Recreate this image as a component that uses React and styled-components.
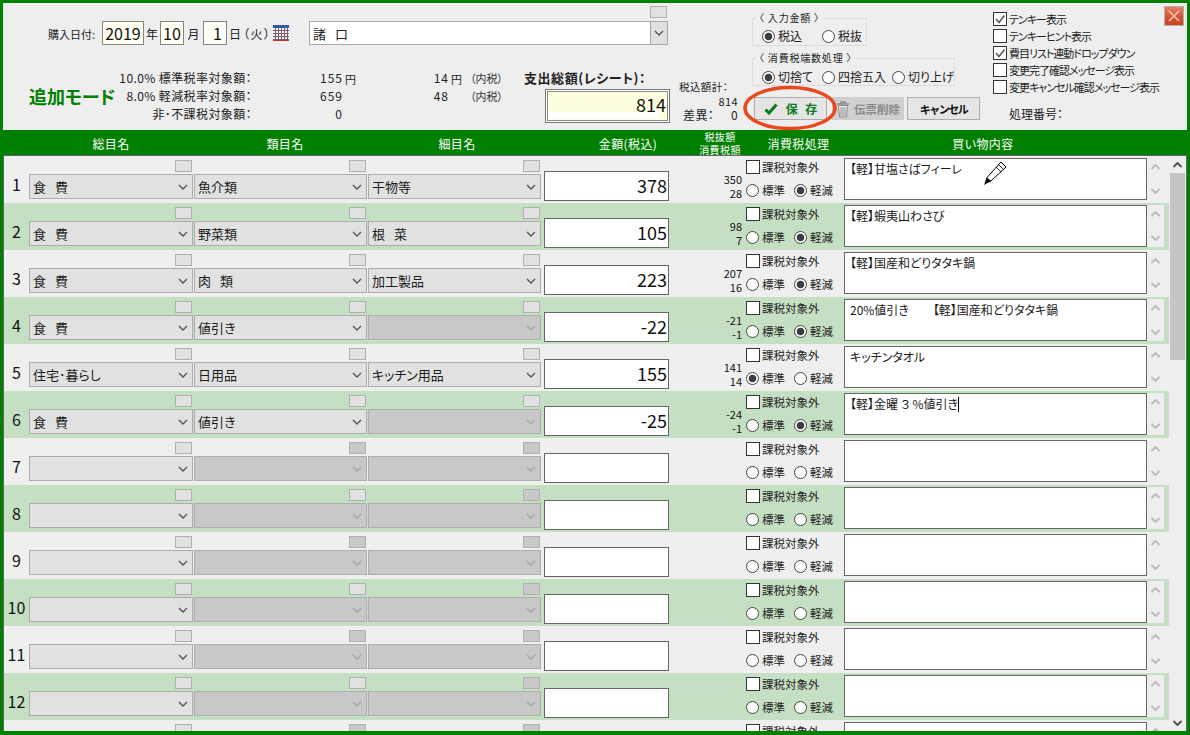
import React from "react";
import styled, { createGlobalStyle } from "styled-components";

const dither = (a, b) => `repeating-conic-gradient(${a} 0 25%, ${b} 0 50%) 0 0 / 2px 2px`;

const Global = createGlobalStyle`
  html, body { margin: 0; padding: 0; background: #eeeeee; }
  body { font-family: "Noto Sans CJK JP", "Noto Sans", sans-serif; color: #222; font-feature-settings: "palt"; }
  * { box-sizing: border-box; }
`;

const Frame = styled.div`
  position: relative; width: 1190px; height: 735px; overflow: hidden;
  display: flex; flex-direction: column;
  border: 3px solid #008000; border-bottom-width: 4px; background: #eeeeee;
`;

const TopPanel = styled.header`
  flex: none; height: 127px; display: flex; align-items: flex-start; background: #eeeeee;
`;
const LeftBlock = styled.div`
  flex: none; width: 749px; display: flex; flex-direction: column;
`;
const DateRow = styled.div`
  height: 39px; margin-top: 3px; padding-left: 45px; display: flex; align-items: flex-end;
`;
const DateCaption = styled.span`
  font-size: 11px; height: 24px; line-height: 26px; width: 54px;
`;
const DateInput = styled.input`
  width: ${p => p.$w}px; height: 24px; padding: 0 ${p => (p.$right ? 4 : 0)}px 0 0; margin: 0;
  border: 1px solid #858585; background: ${p => (p.$right ? dither("#fbfbec", "#ffffff") : "#fffff2")};
  font: 16px/22px "Noto Sans CJK JP", sans-serif; color: #111;
  text-align: ${p => (p.$right ? "right" : "center")}; outline: none;
`;
const DateUnit = styled.span`
  font-size: 12px; height: 24px; line-height: 26px; width: ${p => p.$w}px; text-align: ${p => p.$align || "center"};
  letter-spacing: ${p => p.$track || 0}px; white-space: nowrap;
`;
const CalendarSlot = styled.span`
  display: flex; width: 36px; height: 20px; align-items: flex-start;
`;
const StoreColumn = styled.div`
  width: 359px; display: flex; flex-direction: column; align-items: flex-end; gap: 3px;
`;
const StoreSelect = styled.div`
  width: 100%; height: 24px; display: flex; align-items: center; justify-content: space-between;
  background: #fff; border: 1px solid #a8a8a8; font-size: 13px; padding-left: 3px; word-spacing: 6px;
`;
const StoreArrow = styled.span`
  width: 18px; height: 24px; margin-right: -1px; display: flex; align-items: center; justify-content: center;
  background: ${dither("#e4e4e4", "#dcdcdc")}; border: 1px solid #a8a8a8;
`;
const SummaryRow = styled.div`
  display: flex; align-items: flex-start; margin-top: 24px;
`;
const ModeTitle = styled.div`
  width: 115px; padding: 16px 0 0 26px; color: #008000; font-size: 18px; font-weight: 700; line-height: 22px; white-space: nowrap;
`;
const SummaryGrid = styled.div`
  display: grid; grid-template-columns: 134px 91px 90px 16px 21px 33px; grid-auto-rows: 18px;
  font-size: 12px; line-height: 18px; white-space: nowrap;
`;
const SumLabel = styled.span`
  text-align: right; font-size: 12px; letter-spacing: .4px;
`;
const SumValue = styled.span`
  text-align: right; letter-spacing: 1px;
`;
const Yen = styled.span`
  padding-left: 2px; font-size: 11px; line-height: 21px;
`;
const Note = styled.span`
  font-size: 11px; color: #333;
`;
const TotalBlock = styled.div`
  margin-left: 21px; display: flex; flex-direction: column; align-items: flex-end; width: 146px;
`;
const TotalLabel = styled.div`
  width: 100%; font-size: 13px; font-weight: 700; line-height: 16px; margin-top: 1px; letter-spacing: .55px; white-space: nowrap;
`;
const TotalInput = styled.input`
  width: 125px; height: 34px; margin: 3px 0 0; padding: 0 3px 4px 0; border: 1px solid #777;
  box-shadow: inset 0 0 0 1px #fff, inset 0 0 0 2px #888;
  background: linear-gradient(#fff, #fff) no-repeat left 2px bottom 3px / 110px 7px, #fffde0;
  font: 18px/24px "Noto Sans CJK JP", sans-serif; text-align: right; color: #111; outline: none;
`;
const CheckSum = styled.div`
  margin: 11px 0 0 9px; width: 59px; display: grid; grid-auto-rows: 14px; line-height: 14px; white-space: nowrap;
`;
const CheckSumLine = styled.div`
  display: flex; justify-content: ${p => p.$between ? "space-between" : "flex-end"};
  font-size: ${p => p.$size || 10}px; padding-left: ${p => p.$inset || 0}px; letter-spacing: .4px;
`;
const CheckSumTitle = styled.span`
  margin-right: auto;
`;
const TaxBlock = styled.div`
  flex: none; width: 241px; display: flex; flex-direction: column; align-items: flex-start;
`;
const Group = styled.fieldset`
  width: ${p => p.$w}px; height: ${p => p.$h}px; margin: ${p => p.$top}px 0 0; padding: ${p => p.$pad}px 0 0 9px;
  border: 1px solid #dcdcdc; display: flex; align-items: flex-start;
`;
const GroupTitle = styled.legend`
  padding: 0 3px; margin-left: -6px; font-size: 10px; line-height: 12px; letter-spacing: .8px; color: #222;
`;
const RadioItem = styled.label`
  display: flex; align-items: center; gap: 3px; font-size: ${p => p.$size || 12}px; line-height: 18px; height: 18px; white-space: nowrap; width: ${p => p.$w ? p.$w + "px" : "auto"};
`;
const RadioDot = styled.input.attrs({ type: "radio", readOnly: true })`
  appearance: none; flex: none; width: 13px; height: 13px; margin: 0; border-radius: 50%;
  border: 1px solid #444; background: #fff;
  &:checked { background: radial-gradient(circle, #3c3c44 0 3.4px, #fff 4.2px); }
`;
const ButtonRow = styled.div`
  display: flex; margin: 11px 0 0 2px;
`;
const ActionButton = styled.button`
  height: 23px; width: ${p => p.$w}px; margin: 0 ${p => p.$gap || 0}px 0 0; padding: 0;
  display: flex; align-items: center; justify-content: center; gap: ${p => p.$iconGap || 0}px;
  border: 1px solid ${p => p.$disabled ? "#cdcdcd" : "#adadad"};
  background: ${p => p.$disabled ? "#cfcfcf" : dither("#e8e8e8", "#e2e2e2")};
  color: ${p => p.$color || "#111"}; font: 700 ${p => p.$size || 12}px "Noto Sans CJK JP", sans-serif;
  letter-spacing: ${p => p.$track || 0}px; word-spacing: ${p => p.$word || 0}px; white-space: nowrap;
`;
const OptionColumn = styled.div`
  flex: none; width: 171px; padding-top: 7px; display: flex; flex-direction: column;
`;
const OptionRow = styled.div`
  display: flex; align-items: center; gap: 2px; height: 17px; font-size: 11px; letter-spacing: -1px; white-space: nowrap;
`;
const Box = styled.span`
  flex: none; width: 14px; height: 14px; background: #fff; border: 1px solid #333; display: flex; align-items: center; justify-content: center;
`;
const JobNumber = styled.div`
  margin: 11px 0 0 16px; font-size: 12px; line-height: 16px;
`;
const CloseButton = styled.button`
  margin: 3px 3px 0 auto; flex: none; width: 20px; height: 20px; padding: 0;
  border: 1px solid #b0b0b0; display: flex; align-items: center; justify-content: center;
  background: linear-gradient(#e8806a, #d9502f 55%, #c9441f);
`;

const HeadBar = styled.div`
  flex: none; height: 25px; background: #008000; color: #fff; padding-left: 26px;
  display: grid; grid-template-columns: 164px 184px 160px 161px 44px 113px 256px; align-items: center;
  font-size: 12px; letter-spacing: .4px; text-align: center;
`;
const HeadCell = styled.div`
  padding-left: ${p => p.$inset || 0}px; white-space: nowrap; font-size: ${p => p.$size || 12}px; line-height: ${p => p.$lh ? p.$lh + "px" : "inherit"};
`;

const Body = styled.div`
  flex: 1; min-height: 0; display: flex; border: 1px solid #666; border-bottom: none; overflow: hidden;
`;
const List = styled.div`
  flex: none; width: 1165px; display: flex; flex-direction: column;
`;
const Row = styled.div`
  flex: none; height: 47px; display: flex; padding-right: 5px;
  background: ${p => p.$even ? dither("#c3dfc1", "#c7e0c5") : "#efefef"};
`;
const RowNo = styled.div`
  flex: none; width: 25px; padding-top: 18px; text-align: center; font-size: 16px; line-height: 20px; color: #111;
`;
const SelectCell = styled.div`
  flex: none; width: ${p => p.$w}px; margin-right: 1px; padding-top: 4px; display: flex; flex-direction: column; align-items: flex-end; gap: 2px;
`;
const TinyBox = styled.span`
  display: block; width: 17px; height: 12px; margin-right: 1px;
  border: 1px solid #b0b0b0; background: ${p => p.$off ? dither("#cbcbcb", "#c6c6c6") : dither("#e4e4e4", "#dedede")};
`;
const Select = styled.div`
  width: 100%; height: 25px; display: flex; align-items: center; justify-content: space-between;
  padding: 0 4px 0 3px; border: 1px solid #adadad; font-size: 13px; word-spacing: 6px; white-space: nowrap; color: #1a1a1a;
  background: ${p => p.$off ? dither("#cbcbcb", "#c5c5c5") : dither("#e4e4e4", "#dedede")};
`;
const Amount = styled.input`
  flex: none; width: 125px; height: 30px; margin: 15px 0 0 2px; padding: 0 1px 2px 0; border: 1px solid #666; background: #fff;
  font: 18px/26px "Noto Sans CJK JP", sans-serif; text-align: right; color: #111; outline: none;
`;
const TaxCell = styled.div`
  flex: none; width: 75px; padding: 16px 2px 0 0; text-align: right; font-size: 11px; line-height: 14px; color: #111;
`;
const ProcessCell = styled.div`
  flex: none; width: 100px; padding: 4px 0 0 2px;
`;
const ExemptRow = styled.div`
  display: flex; align-items: center; gap: 2px; height: 14px; font-size: 11.5px; line-height: 12px; white-space: nowrap;
`;
const RateRow = styled.div`
  display: flex; align-items: center; margin-top: 9px; height: 14px;
`;
const MemoWrap = styled.div`
  flex: none; height: 42px; margin-top: 2px; display: flex;
`;
const Memo = styled.div`
  width: 303px; height: 42px; padding: 1px 5px; border: 1px solid #666; background: #fff;
  font-size: 12px; line-height: 18px; white-space: nowrap; overflow: hidden; color: #1a1a1a;
`;
const Caret = styled.span`
  display: inline-block; width: 1px; height: 15px; background: #000; vertical-align: -3px;
`;
const MiniScroll = styled.div`
  width: 17px; padding: 6px 0; display: flex; flex-direction: column; align-items: center; justify-content: space-between; background: #eeeeee;
`;
const PageScroll = styled.div`
  flex: 1; background: #eeeeee; display: flex; flex-direction: column; align-items: center;
`;
const ScrollArrow = styled.div`
  flex: none; height: 17px; width: 100%; display: flex; align-items: center; justify-content: center; margin-top: ${p => p.$end ? "auto" : 0};
`;
const ScrollThumb = styled.div`
  flex: none; width: 15px; height: 187px; margin-right: 1px; background: ${dither("#c8c8c8", "#c2c2c2")};
`;
const Ring = styled.svg`
  position: absolute; left: 740px; top: 81px; pointer-events: none;
`;
const Cursor = styled.svg`
  position: absolute; left: 979px; top: 157px; pointer-events: none;
`;

const Chevron = ({ up, color = "#555", w = 10, sw = 1.4 }) => (
  <svg width={w} height={6} viewBox="0 0 10 6" fill="none" aria-hidden="true">
    <path d={up ? "M1 5 5 1 9 5" : "M1 1 5 5 9 1"} stroke={color} strokeWidth={sw} />
  </svg>
);
const Tick = () => (
  <svg width="12" height="12" viewBox="0 0 12 12" fill="none" aria-hidden="true">
    <path d="M2 6 5 9.5 10.5 2.5" stroke="#555" strokeWidth="1.5" />
  </svg>
);
const Calendar = () => (
  <svg width="16" height="16" viewBox="0 0 16 16" aria-hidden="true">
    <rect width="16" height="16" fill="#fff" />
    <rect width="16" height="3" fill="#2a5db0" />
    <path d="M0 5.5h16M0 8.5h16M0 11.5h16M0 14.5h16M2.5 3v13M5.5 3v13M8.5 3v13M11.5 3v13M14.5 3v13" stroke="#7a5a6a" strokeWidth="1" />
    <path d="M0 15.5h16" stroke="#c03030" />
  </svg>
);
const SaveTick = () => (
  <svg width="14" height="12" viewBox="0 0 14 12" fill="none" aria-hidden="true">
    <path d="M1.5 6.5 5 10 12.5 1.5" stroke="#0a7a1a" strokeWidth="3" />
  </svg>
);
const Trash = () => (
  <svg width="14" height="18" viewBox="0 0 14 18" fill="none" stroke="#8c8c8c" aria-hidden="true">
    <path d="M1 4h12M5 4V2h4v2" strokeWidth="1.4" />
    <path d="M2.5 5.5 3.5 17h7l1-11.5z" fill="#eee" />
    <path d="M5 7v9M7 7v9M9 7v9" strokeWidth="1" />
  </svg>
);

const Radio = ({ on, label, w, size, name }) => (
  <RadioItem $w={w} $size={size}><RadioDot name={name} checked={!!on} />{label}</RadioItem>
);
const Option = ({ on, label }) => (
  <OptionRow><Box>{on && <Tick />}</Box>{label}</OptionRow>
);

const filled = [
  { a: "食 費", b: "魚介類", c: "干物等", amt: 378, ex: 350, tax: 28, std: false, memo: "【軽】甘塩さばフィーレ" },
  { a: "食 費", b: "野菜類", c: "根 菜", amt: 105, ex: 98, tax: 7, std: false, memo: "【軽】蝦夷山わさび" },
  { a: "食 費", b: "肉 類", c: "加工製品", amt: 223, ex: 207, tax: 16, std: false, memo: "【軽】国産和どりタタキ鍋" },
  { a: "食 費", b: "値引き", c: null, amt: -22, ex: -21, tax: -1, std: false, memo: "20%値引き　　【軽】国産和どりタタキ鍋" },
  { a: "住宅･暮らし", b: "日用品", c: "キッチン用品", amt: 155, ex: 141, tax: 14, std: true, memo: "キッチンタオル" },
  { a: "食 費", b: "値引き", c: null, amt: -25, ex: -24, tax: -1, std: false, memo: "【軽】金曜 ３ %値引き", caret: true },
];
const rows = Array.from({ length: 13 }, (_, i) => filled[i] || { a: "", b: null, c: null, amt: "", ex: "", tax: "", std: false, memo: "", blank: true });

const ComboCell = ({ w, text, off, evenRow }) => (
  <SelectCell $w={w}>
    <TinyBox $off={off && !evenRow} />
    <Select $off={off}>
      <span>{text}</span>
      <Chevron color={off ? "#a5a5a5" : "#555"} />
    </Select>
  </SelectCell>
);

export default function App() {
  return (
    <Frame>
      <Global />
      <TopPanel>
        <LeftBlock>
          <DateRow>
            <DateCaption>購入日付:</DateCaption>
            <DateInput $w={42} readOnly value="2019" />
            <DateUnit $w={16}>年</DateUnit>
            <DateInput $w={24} readOnly value="10" />
            <DateUnit $w={19}>月</DateUnit>
            <DateInput $w={24} $right readOnly value="1" />
            <DateUnit $w={16}>日</DateUnit>
            <DateUnit $w={30} $align="left" $track={1.5}>（火）</DateUnit>
            <CalendarSlot><Calendar /></CalendarSlot>
            <StoreColumn>
              <TinyBox />
              <StoreSelect>
                <span>諸 口</span>
                <StoreArrow><Chevron /></StoreArrow>
              </StoreSelect>
            </StoreColumn>
          </DateRow>
          <SummaryRow>
            <ModeTitle>追加モード</ModeTitle>
            <SummaryGrid>
              <SumLabel>10.0% 標準税率対象額：</SumLabel><SumValue>155</SumValue><Yen>円</Yen><SumValue>14</SumValue><Yen>円</Yen><Note>（内税）</Note>
              <SumLabel>8.0% 軽減税率対象額：</SumLabel><SumValue>659</SumValue><Yen /><SumValue>48</SumValue><Yen /><Note>（内税）</Note>
              <SumLabel>非･不課税対象額：</SumLabel><SumValue>0</SumValue>
            </SummaryGrid>
            <TotalBlock>
              <TotalLabel>支出総額(レシート)：</TotalLabel>
              <TotalInput readOnly value="814" />
            </TotalBlock>
            <CheckSum>
              <CheckSumLine $size={10.5}><CheckSumTitle>税込額計：</CheckSumTitle></CheckSumLine>
              <CheckSumLine $size={11}>814</CheckSumLine>
              <CheckSumLine $size={12} $between $inset={4}><span>差異：</span><span>0</span></CheckSumLine>
            </CheckSum>
          </SummaryRow>
        </LeftBlock>
        <TaxBlock>
          <Group $w={115} $h={34} $top={9} $pad={3}>
            <GroupTitle>〈 入力金額 〉</GroupTitle>
            <Radio name="g1" on label="税込" w={60} />
            <Radio name="g1" label="税抜" />
          </Group>
          <Group $w={203} $h={34} $top={6} $pad={4}>
            <GroupTitle>〈 消費税端数処理 〉</GroupTitle>
            <Radio name="g2" on label="切捨て" w={60} />
            <Radio name="g2" label="四捨五入" w={70} />
            <Radio name="g2" label="切り上げ" />
          </Group>
          <ButtonRow>
            <ActionButton $w={73} $gap={5} $color="#0a7a1a" $iconGap={8} $word={5}><SaveTick /><span>保 存</span></ActionButton>
            <ActionButton $w={72} $gap={3} $disabled $color="#8a8a8a" $size={11.5} $iconGap={4}><Trash /><span>伝票削除</span></ActionButton>
            <ActionButton $w={73} $size={11} $track={-1.5}>キャンセル</ActionButton>
          </ButtonRow>
        </TaxBlock>
        <OptionColumn>
          <Option on label="テンキー表示" />
          <Option label="テンキーヒント表示" />
          <Option on label="費目リスト連動ドロップダウン" />
          <Option label="変更完了確認メッセージ表示" />
          <Option label="変更キャンセル確認メッセージ表示" />
          <JobNumber>処理番号：</JobNumber>
        </OptionColumn>
        <CloseButton aria-label="閉じる">
          <svg width="12" height="12" viewBox="0 0 12 12" aria-hidden="true"><path d="M1 1 11 11M11 1 1 11" stroke="#f6c4b6" strokeWidth="1.6" /></svg>
        </CloseButton>
      </TopPanel>

      <HeadBar>
        <HeadCell>総目名</HeadCell>
        <HeadCell>類目名</HeadCell>
        <HeadCell>細目名</HeadCell>
        <HeadCell $inset={21}>金額(税込)</HeadCell>
        <HeadCell $size={10} $lh={13}>税抜額<br />消費税額</HeadCell>
        <HeadCell>消費税処理</HeadCell>
        <HeadCell>買い物内容</HeadCell>
      </HeadBar>

      <Body>
        <List>
          {rows.map((r, i) => {
            const even = i % 2 === 1;
            return (
              <Row key={i} $even={even}>
                <RowNo>{i + 1}</RowNo>
                <ComboCell w={164} text={r.a} />
                <ComboCell w={173} text={r.b} off={r.b === null} evenRow={even} />
                <ComboCell w={173} text={r.c} off={r.c === null} evenRow={even && !r.blank} />
                <Amount readOnly value={r.amt} />
                <TaxCell>{r.ex}<br />{r.tax}</TaxCell>
                <ProcessCell>
                  <ExemptRow><Box />課税対象外</ExemptRow>
                  <RateRow>
                    <Radio name={`r${i}`} on={r.std} label="標準" w={48} size={11.5} />
                    <Radio name={`r${i}`} on={!r.std && !r.blank} label="軽減" size={11.5} />
                  </RateRow>
                </ProcessCell>
                <MemoWrap>
                  <Memo>{r.memo}{r.caret && <Caret />}</Memo>
                  <MiniScroll>
                    <Chevron up color="#bcbcbc" w={11} sw={2} />
                    <Chevron color="#bcbcbc" w={11} sw={2} />
                  </MiniScroll>
                </MemoWrap>
              </Row>
            );
          })}
        </List>
        <PageScroll>
          <ScrollArrow><Chevron up color="#555" w={11} sw={2} /></ScrollArrow>
          <ScrollThumb />
          <ScrollArrow $end><Chevron color="#555" w={11} sw={2} /></ScrollArrow>
        </PageScroll>
      </Body>

      <Ring width="100" height="50" viewBox="0 0 100 50" fill="none" aria-hidden="true">
        <ellipse cx="47" cy="24" rx="45" ry="20.5" stroke="#e8481c" strokeWidth="3.5" />
      </Ring>
      <Cursor width="26" height="26" viewBox="0 0 26 26" aria-hidden="true">
        <path d="M19 2 24 7 9 21 3.5 23 5 17.5z" fill="#fff" stroke="#000" strokeWidth="1" />
        <path d="M16.5 4.5 21.5 9.5M14 7 19 12" stroke="#000" strokeWidth=".8" fill="none" />
        <path d="M5 17.5 9 21 2 25z" fill="#000" />
      </Cursor>
    </Frame>
  );
}
